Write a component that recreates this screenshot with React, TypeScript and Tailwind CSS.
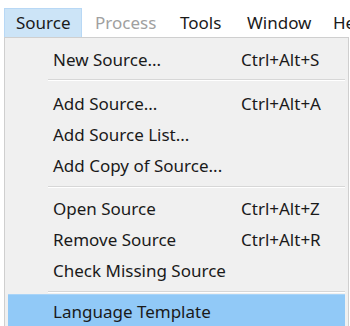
import React from "react";

const menus = [
  { label: "Source", x: 16, active: true },
  { label: "Process", x: 95, disabled: true },
  { label: "Tools", x: 180 },
  { label: "Window", x: 247 },
  { label: "Help", x: 333 },
];

export default function App() {
  return (
    <div
      className="relative w-[350px] h-[326px] overflow-hidden bg-white text-[#1a1a1a]"
      style={{ fontFamily: '"Noto Sans", "Open Sans", sans-serif' }}
    >
      {/* menu bar */}
      <div className="h-[37px] pt-[8px] flex">
        <div className="ml-[4px] h-[29px] w-[78px] bg-[#cce4f7] border border-[#b8d8f5] border-b-0" />
      </div>
      {menus.map((m) => (
        <span
          key={m.label}
          className={
            "absolute top-[8px] leading-[29px] text-[17px] whitespace-nowrap " +
            (m.disabled ? "text-[#a0a0a0]" : "")
          }
          style={{ left: m.x }}
        >
          {m.label}
        </span>
      ))}

      {/* dropdown panel */}
      <div className="ml-[4px] w-[345px] h-[289px] bg-[#f0f0f0] border-l border-t border-r border-[#cfcfcf] flex flex-col">
        <MenuItem label="New Source..." keys="Ctrl+Alt+S" pt={6} />
        <Separator mt={4} mb={7} />
        <MenuItem label="Add Source..." keys="Ctrl+Alt+A" />
        <MenuItem label="Add Source List..." />
        <MenuItem label="Add Copy of Source..." />
        <Separator mt={5} mb={5} />
        <MenuItem label="Open Source" keys="Ctrl+Alt+Z" />
        <MenuItem label="Remove Source" keys="Ctrl+Alt+R" />
        <MenuItem label="Check Missing Source" />
        <Separator mt={5} mb={1} />
        <div className="mx-[3px] h-[40px] bg-[#91c9f7] border-t border-[#a9d4f8] pl-[45px] pt-[1px] text-[17px] leading-[31px] whitespace-nowrap">
          Language Template
        </div>
      </div>
    </div>
  );
}

function MenuItem({ label, keys, pt = 0 }: { label: string; keys?: string; pt?: number }) {
  return (
    <div
      className="h-[31px] box-content flex text-[17px] leading-[31px] whitespace-nowrap"
      style={{ paddingTop: pt }}
    >
      <span className="pl-[48px] w-[236px]">{label}</span>
      <span>{keys}</span>
    </div>
  );
}

function Separator({ mt, mb }: { mt: number; mb: number }) {
  return (
    <div
      className="ml-[43px] mr-[3px] h-[2px] border-t border-[#d7d7d7] border-b border-b-white box-border"
      style={{ marginTop: mt, marginBottom: mb }}
    />
  );
}
